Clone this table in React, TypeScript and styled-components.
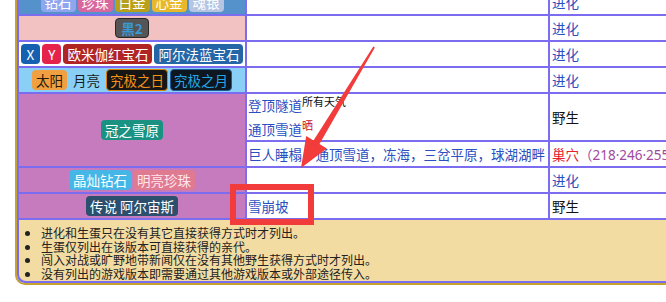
import styled, { createGlobalStyle } from "styled-components";

const GlobalStyle = createGlobalStyle`
  html, body {
    margin: 0;
    padding: 0;
    background: #fff;
    overflow: hidden;
  }
  body {
    width: 666px;
    height: 302px;
    font-family: "Noto Sans CJK SC", "Noto Sans", sans-serif;
  }
`;

const Page = styled.div`
  position: relative;
  width: 666px;
  height: 302px;
  overflow: hidden;
`;

const Frame = styled.div`
  margin: -14px 0 0 15px;
  width: 760px;
  border: 2px solid #c6a22e;
  border-radius: 10px;
  overflow: hidden;
`;

const Grid = styled.div`
  display: grid;
  grid-template-columns: 226px 301px 1fr;
  grid-template-rows: repeat(4, 24px) 46px 24px 24px 24px 61px;
  gap: 2px;
  padding: 2px;
  background: #7c6cf0;
`;

const GameCell = styled.div<{ $bg: string; $span?: number }>`
  display: flex;
  align-items: center;
  justify-content: center;
  gap: 2px;
  background: ${(p) => p.$bg};
  grid-row: ${(p) => (p.$span ? `span ${p.$span}` : "auto")};
`;

const Badge = styled.span<{ $bg: string; $fg?: string; $border?: string; $pad?: number }>`
  display: inline-block;
  padding: 1px ${(p) => p.$pad ?? 4}px;
  border-radius: 4px;
  line-height: 18px;
  font-size: 13.5px;
  white-space: nowrap;
  background: ${(p) => p.$bg};
  color: ${(p) => p.$fg ?? "#fff"};
  border: ${(p) => (p.$border ? `1px solid ${p.$border}` : "none")};
`;

const DarkBadge = styled(Badge)`
  font-weight: 700;
  padding: 0 5px;
`;

const InfoCell = styled.div`
  display: flex;
  flex-direction: column;
  justify-content: center;
  background: #fff;
  padding: 0 1px;
  font-size: 13.5px;
  color: #111;
  white-space: nowrap;
  overflow: hidden;
`;

const MethodCell = styled(InfoCell)`
  padding-left: 2px;
`;

const Place = styled.div`
  line-height: 24px;
  height: 24px;
`;

const Link = styled.span`
  color: #2a4fbf;
`;

const Sup = styled.span<{ $red?: boolean }>`
  font-size: 11px;
  vertical-align: 5px;
  line-height: 1;
  color: ${(p) => (p.$red ? "#c81010" : "#111")};
`;

const Den = styled.span`
  color: #e8202a;
`;

const DenIds = styled.span`
  color: #a04a9e;
  font-family: "Noto Sans", "Noto Sans CJK SC", sans-serif;
`;

const Notes = styled.div`
  grid-column: 1 / -1;
  background: #f2dca2;
  border-bottom-left-radius: 7px;
  padding-top: 6px;
`;

const NoteList = styled.ul`
  margin: 0;
  padding-left: 22px;
  font-size: 12px;
  line-height: 13.5px;
  color: #222;
  white-space: nowrap;
`;

const RedBox = styled.div`
  position: absolute;
  left: 230px;
  top: 184px;
  width: 84px;
  height: 41px;
  box-sizing: border-box;
  border: 6px solid #f23b3b;
`;

const ArrowLayer = styled.svg`
  position: absolute;
  left: 0;
  top: 0;
  pointer-events: none;
`;

const notes = [
  "进化和生蛋只在没有其它直接获得方式时才列出。",
  "生蛋仅列出在该版本可直接获得的亲代。",
  "闯入对战或旷野地带新闻仅在没有其他野生获得方式时才列出。",
  "没有列出的游戏版本即需要通过其他游戏版本或外部途径传入。",
];

export default function App() {
  return (
    <Page>
      <GlobalStyle />
      <Frame>
        <Grid>
          <GameCell $bg="#5592cc">
            <Badge $bg="#8fa6ee">钻石</Badge>
            <Badge $bg="#d867a0">珍珠</Badge>
            <Badge $bg="#b9a01a">白金</Badge>
            <Badge $bg="#e8b72a">心金</Badge>
            <Badge $bg="#b4c4e2">魂银</Badge>
          </GameCell>
          <InfoCell />
          <MethodCell>
            <Link>进化</Link>
          </MethodCell>

          <GameCell $bg="#f2c1c1">
            <DarkBadge $bg="#555" $fg="#3a98d8" $border="#2a2a2a">
              黑2
            </DarkBadge>
          </GameCell>
          <InfoCell />
          <MethodCell>
            <Link>进化</Link>
          </MethodCell>

          <GameCell $bg="#fff">
            <Badge $bg="#1560b0" $pad={6}>X</Badge>
            <Badge $bg="#e5224c" $pad={6}>Y</Badge>
            <Badge $bg="#b02424">欧米伽红宝石</Badge>
            <Badge $bg="#2566a6">阿尔法蓝宝石</Badge>
          </GameCell>
          <InfoCell />
          <MethodCell>
            <Link>进化</Link>
          </MethodCell>

          <GameCell $bg="#8ad0f6">
            <Badge $bg="#f0a040" $fg="#2a1a08">太阳</Badge>
            <Badge $bg="#8ad0f6" $fg="#1a1a1a">月亮</Badge>
            <Badge $bg="#161616" $fg="#f39214" $border="#e08000" $pad={3}>
              究极之日
            </Badge>
            <Badge $bg="#0e1620" $fg="#24a6e6" $border="#1e5a96" $pad={3}>
              究极之月
            </Badge>
          </GameCell>
          <InfoCell />
          <MethodCell>
            <Link>进化</Link>
          </MethodCell>

          <GameCell $bg="#c77bbf" $span={2}>
            <Badge $bg="#1a9282">冠之雪原</Badge>
          </GameCell>
          <InfoCell>
            <Place>
              <Link>登顶隧道</Link>
              <Sup>所有天气</Sup>
            </Place>
            <Place>
              <Link>通顶雪道</Link>
              <Sup $red>晒</Sup>
            </Place>
          </InfoCell>
          <MethodCell>野生</MethodCell>
          <InfoCell>
            <Link>巨人睡榻，通顶雪道，冻海，三岔平原，球湖湖畔</Link>
          </InfoCell>
          <MethodCell>
            <span>
              <Den>巢穴</Den>
              <DenIds>（218·246·255）</DenIds>
            </span>
          </MethodCell>

          <GameCell $bg="#c77bbf">
            <Badge $bg="#45b6e6">晶灿钻石</Badge>
            <Badge $bg="#e07a90" $fg="#ffe6ee">明亮珍珠</Badge>
          </GameCell>
          <InfoCell />
          <MethodCell>
            <Link>进化</Link>
          </MethodCell>

          <GameCell $bg="#c77bbf">
            <Badge $bg="#2c4f6e">传说 阿尔宙斯</Badge>
          </GameCell>
          <InfoCell>
            <Link>雪崩坡</Link>
          </InfoCell>
          <MethodCell>野生</MethodCell>

          <Notes>
            <NoteList>
              {notes.map((n) => (
                <li key={n}>{n}</li>
              ))}
            </NoteList>
          </Notes>
        </Grid>
      </Frame>

      <RedBox />
      <ArrowLayer width="666" height="302" viewBox="0 0 666 302">
        <polygon
          points="373.3,46.6 313.5,140.5 306.2,136.1 301,168 326.8,148.5 319.5,144.1 374.9,47.6"
          fill="#f23b3b"
        />
      </ArrowLayer>
    </Page>
  );
}
